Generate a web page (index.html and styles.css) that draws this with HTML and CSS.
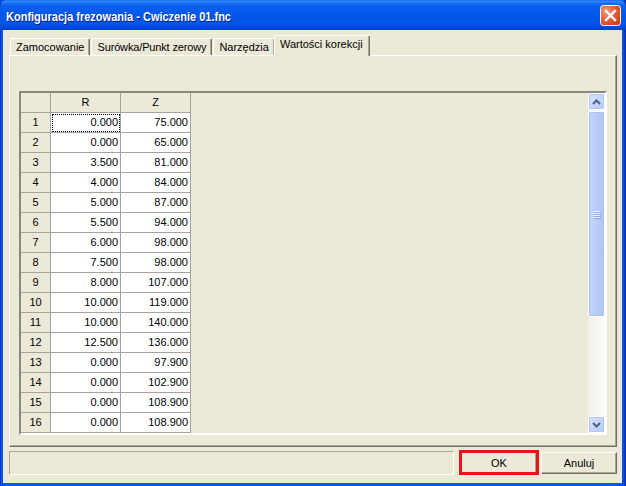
FILE: index.html
```html
<!DOCTYPE html>
<html>
<head>
<meta charset="utf-8">
<link rel="stylesheet" href="styles.css">
</head>
<body>
<div class="window">
  <div class="titlebar">
    <span class="title">Konfiguracja frezowania - Cwiczenie 01.fnc</span>
    <div class="close">
      <svg width="21" height="21" viewBox="0 0 21 21">
        <defs>
          <radialGradient id="cg" cx="0.3" cy="0.3" r="0.9">
            <stop offset="0" stop-color="#F39A7E"/>
            <stop offset="0.55" stop-color="#E2582F"/>
            <stop offset="1" stop-color="#C53A12"/>
          </radialGradient>
        </defs>
        <rect x="0.5" y="0.5" width="20" height="20" rx="3" fill="url(#cg)" stroke="#fff"/>
        <path d="M6 6 L15 15 M15 6 L6 15" stroke="#fff" stroke-width="2.4" stroke-linecap="square"/>
      </svg>
    </div>
  </div>
  <div class="client">
    <div class="tabs">
      <div class="tab">Zamocowanie</div>
      <div class="tab">Surówka/Punkt zerowy</div>
      <div class="tab">Narzędzia</div>
      <div class="tab active">Wartości korekcji</div>
    </div>
    <div class="panel">
      <div class="gridframe">
        <div class="sheet">
          <div class="hc"></div><div class="hc">R</div><div class="hc">Z</div><div class="blank"></div>
          <div class="rh">1</div><div class="c focus">0.000</div><div class="c">75.000</div><div class="blank"></div>
          <div class="rh">2</div><div class="c">0.000</div><div class="c">65.000</div><div class="blank"></div>
          <div class="rh">3</div><div class="c">3.500</div><div class="c">81.000</div><div class="blank"></div>
          <div class="rh">4</div><div class="c">4.000</div><div class="c">84.000</div><div class="blank"></div>
          <div class="rh">5</div><div class="c">5.000</div><div class="c">87.000</div><div class="blank"></div>
          <div class="rh">6</div><div class="c">5.500</div><div class="c">94.000</div><div class="blank"></div>
          <div class="rh">7</div><div class="c">6.000</div><div class="c">98.000</div><div class="blank"></div>
          <div class="rh">8</div><div class="c">7.500</div><div class="c">98.000</div><div class="blank"></div>
          <div class="rh">9</div><div class="c">8.000</div><div class="c">107.000</div><div class="blank"></div>
          <div class="rh">10</div><div class="c">10.000</div><div class="c">119.000</div><div class="blank"></div>
          <div class="rh">11</div><div class="c">10.000</div><div class="c">140.000</div><div class="blank"></div>
          <div class="rh">12</div><div class="c">12.500</div><div class="c">136.000</div><div class="blank"></div>
          <div class="rh">13</div><div class="c">0.000</div><div class="c">97.900</div><div class="blank"></div>
          <div class="rh">14</div><div class="c">0.000</div><div class="c">102.900</div><div class="blank"></div>
          <div class="rh">15</div><div class="c">0.000</div><div class="c">108.900</div><div class="blank"></div>
          <div class="rh">16</div><div class="c">0.000</div><div class="c">108.900</div><div class="blank"></div>
        </div>
        <div class="vscroll">
          <div class="sbtn">
            <svg width="9" height="6" viewBox="0 0 9 6"><path d="M1 5 L4.5 1.5 L8 5" fill="none" stroke="#4D6185" stroke-width="2"/></svg>
          </div>
          <div class="thumb">
            <div class="grip"><i></i><i></i><i></i><i></i></div>
          </div>
          <div class="track"></div>
          <div class="sbtn">
            <svg width="9" height="6" viewBox="0 0 9 6"><path d="M1 1 L4.5 4.5 L8 1" fill="none" stroke="#4D6185" stroke-width="2"/></svg>
          </div>
        </div>
      </div>
    </div>
    <div class="footer">
      <div class="status"></div>
      <div class="okwrap"><div class="btn">OK</div></div>
      <div class="btn">Anuluj</div>
    </div>
  </div>
</div>
</body>
</html>
```

FILE: styles.css
```css
html, body {
  margin: 0;
  padding: 0;
}
body {
  width: 626px;
  height: 486px;
  overflow: hidden;
  font-family: "Liberation Sans", Arial, sans-serif;
  font-size: 11px;
  color: #000;
}
.window {
  width: 626px;
  height: 486px;
  box-sizing: border-box;
  display: flex;
  flex-direction: column;
  background: linear-gradient(to right, #0029B8 0, #0A4FE0 1px, #0A56EC 3px, #0A56EC 622px, #0A48D8 624px, #00249E 626px);
}
.titlebar {
  height: 30px;
  flex: none;
  display: flex;
  align-items: center;
  padding: 0 5px 0 6px;
  background: linear-gradient(#0A5BE6 0, #3B8CFB 1px, #1C73F7 3px, #0A5FEE 6px, #0057EB 16px, #0055E4 24px, #0049D6 28px, #003DC6 30px);
  border-radius: 7px 7px 0 0;
}
.title {
  flex: 1;
  color: #fff;
  font-weight: bold;
  font-size: 13.5px;
  white-space: nowrap;
  transform: scaleX(0.815);
  transform-origin: left center;
  text-shadow: 1px 1px #0A1A80;
  padding-top: 2px;
}
.close {
  width: 21px;
  height: 21px;
  margin-top: 1px;
}
.close svg {
  display: block;
}
.client {
  flex: 1;
  margin: 0 4px 3px 3px;
  background: #ECE9D8;
  display: flex;
  flex-direction: column;
  padding: 0 5px 8px 6px;
}
.tabs {
  height: 26px;
  margin-bottom: -1px;
  display: flex;
  align-items: flex-end;
  padding-left: 1px;
  position: relative;
  z-index: 1;
}
.tab {
  height: 16px;
  margin-bottom: 1px;
  margin-right: 1px;
  padding: 0 5px;
  line-height: 16px;
  border-top: 1px solid #fff;
  border-left: 1px solid #fff;
  border-right: 1px solid #716F64;
  box-shadow: inset -1px 0 #ACA899;
  border-radius: 2px 2px 0 0;
  background: #ECE9D8;
  white-space: nowrap;
}
.tab:nth-child(2) {
  letter-spacing: -0.15px;
}
.tab.active {
  height: 20px;
  margin: 0 -1px 0 -2px;
  padding: 0 6px 0 5px;
  line-height: 17px;
}
.panel {
  height: 392px;
  box-sizing: border-box;
  border-top: 1px solid #fff;
  border-left: 1px solid #fff;
  border-right: 1px solid #716F64;
  border-bottom: 1px solid #716F64;
  box-shadow: inset -1px -1px #ACA899;
  padding: 35px 9px 10px 9px;
}
.gridframe {
  height: 344px;
  box-sizing: border-box;
  border: 2px solid;
  border-color: #8A887E #FFFFFF #FFFFFF #8A887E;
  display: flex;
}
.sheet {
  flex: 1;
  display: grid;
  grid-template-columns: 30px 70px 70px 1fr;
  grid-auto-rows: 20px;
  overflow: hidden;
  background: #ECE9D8;
}
.hc, .rh, .c {
  box-sizing: border-box;
  border-right: 1px solid #A5A39B;
  border-bottom: 1px solid #A5A39B;
  line-height: 19px;
  white-space: nowrap;
}
.hc, .rh {
  background: #ECE9D8;
  text-align: center;
}
.c {
  background: #fff;
  text-align: right;
  padding-right: 2px;
}
.c.focus {
  outline: 1px dotted #000;
  outline-offset: -2px;
}
.vscroll {
  width: 17px;
  flex: none;
  display: flex;
  flex-direction: column;
  background: linear-gradient(to right, #F0EFE8, #FDFDFA);
}
.sbtn {
  height: 17px;
  flex: none;
  box-sizing: border-box;
  border: 1px solid #fff;
  border-radius: 2px;
  background: linear-gradient(135deg, #D6E3FD, #B7CBF8);
  box-shadow: inset 0 0 0 1px #B2C6F4;
  display: flex;
  align-items: center;
  justify-content: center;
}
.sbtn svg {
  display: block;
}
.thumb {
  height: 206px;
  flex: none;
  box-sizing: border-box;
  margin-top: 1px;
  border: 1px solid #fff;
  border-radius: 2px;
  background: linear-gradient(to right, #C6D7FC, #B9CDF9 50%, #AFC5F7);
  box-shadow: inset 0 0 0 1px #A9C0F3;
  display: flex;
  align-items: center;
  justify-content: center;
}
.grip {
  display: flex;
  flex-direction: column;
  gap: 1px;
}
.grip i {
  display: block;
  width: 7px;
  height: 1px;
  background: #EEF4FE;
  box-shadow: 1px 1px #8CA8E8;
}
.track {
  flex: 1;
}
.footer {
  margin-top: 4px;
  height: 24px;
  display: flex;
  align-items: center;
}
.status {
  flex: 1;
  height: 24px;
  box-sizing: border-box;
  border: 1px solid;
  border-color: #ACA899 #FFFFFF #FFFFFF #ACA899;
  margin-right: 7px;
}
.okwrap {
  position: relative;
  margin-right: 4px;
}
.okwrap::after {
  content: "";
  position: absolute;
  left: -2px;
  top: -2px;
  right: -2px;
  bottom: -1px;
  border: 3px solid #E8141A;
}
.btn {
  width: 76px;
  height: 22px;
  box-sizing: border-box;
  border: 1px solid;
  border-color: #FFFFFF #716F64 #716F64 #FFFFFF;
  box-shadow: inset -1px -1px #ACA899;
  background: #ECE9D8;
  text-align: center;
  line-height: 20px;
}
```
